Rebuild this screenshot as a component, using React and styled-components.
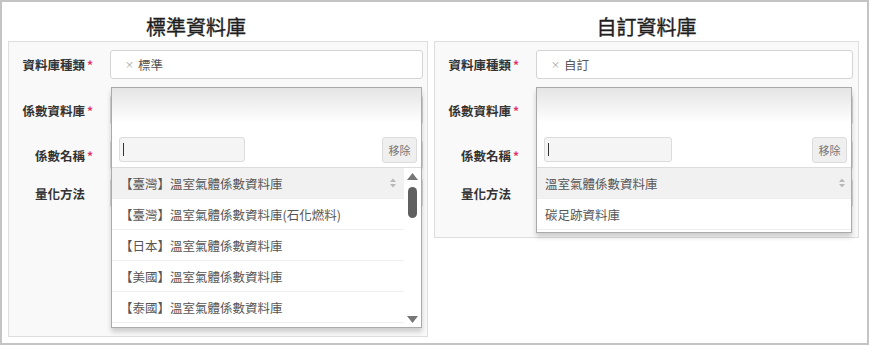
import styled, { createGlobalStyle } from "styled-components";

const GlobalStyle = createGlobalStyle`
  html, body { margin: 0; padding: 0; background: #fff; }
  body { font-family: "Noto Sans CJK TC", "Noto Sans", sans-serif; }
`;

const Frame = styled.div`
  width: 869px;
  height: 345px;
  box-sizing: border-box;
  border: 2px solid #c4c4c4;
  padding: 0 6px;
  display: flex;
  gap: 6px;
`;

const Column = styled.div`
  width: ${(p) => p.$w}px;
  display: flex;
  flex-direction: column;
`;

const Title = styled.div`
  padding: 14px ${(p) => p.$offset}px 0 0;
  height: 22px;
  line-height: 22px;
  margin-bottom: 3px;
  text-align: center;
  font-size: 20px;
  font-weight: 400;
  color: #1e1e1e;
  -webkit-text-stroke: 0.35px #1e1e1e;
`;

const Card = styled.div`
  position: relative;
  box-sizing: border-box;
  height: ${(p) => p.$h}px;
  border: 1px solid #dedede;
  background: #f9f9f9;
  padding: 8px ${(p) => p.$pr}px 0 0;
  display: flex;
  flex-direction: column;
`;

const Row = styled.div`
  display: grid;
  grid-template-columns: 101px 1fr;
  height: ${(p) => p.$h}px;
  margin-top: ${(p) => p.$mt}px;
`;

const Label = styled.div`
  display: flex;
  align-items: center;
  justify-content: flex-end;
  padding-right: 25px;
  font-size: 12.5px;
  font-weight: 700;
  color: #333;
  white-space: nowrap;
`;

const Star = styled.span`
  display: inline-block;
  width: 8px;
  margin-right: -8px;
  text-align: right;
  color: #e2336b;
  font-size: 12px;
`;

const Field = styled.div`
  box-sizing: border-box;
  border: 1px solid #d4d4d4;
  border-radius: 3px;
  background: #fff;
  display: flex;
  align-items: center;
  padding-left: 14px;
  font-size: 12.5px;
  color: #555;
`;

const TagX = styled.span`
  font-size: 9px;
  color: #999;
  margin-right: 4px;
`;

const Drop = styled.div`
  position: absolute;
  top: 45px;
  left: ${(p) => p.$left}px;
  width: ${(p) => p.$w}px;
  height: ${(p) => p.$h}px;
  box-sizing: border-box;
  border: 1px solid #aaa;
  background: #fff;
  box-shadow: 0 4px 5px rgba(0, 0, 0, 0.18);
  display: flex;
  flex-direction: column;
  overflow: hidden;
`;

const DropHead = styled.div`
  height: 41px;
  flex: none;
  background: linear-gradient(#e6e6e6 5%, #fff 85%);
`;

const SearchRow = styled.div`
  flex: none;
  display: flex;
  justify-content: space-between;
  padding: 8px 4px 4px 7px;
  border-bottom: 1px solid #dcdcdc;
`;

const SearchInput = styled.div`
  width: ${(p) => p.$w}px;
  height: 25px;
  box-sizing: border-box;
  border: 1px solid #dcdcdc;
  border-radius: 3px;
  background: #f5f5f5;
  display: flex;
  align-items: center;
  padding-left: 3px;
`;

const Caret = styled.span`
  width: 1px;
  height: 13px;
  background: #333;
`;

const RemoveButton = styled.div`
  width: 35px;
  height: 26px;
  box-sizing: border-box;
  border: 1px solid #dcdcdc;
  border-radius: 3px;
  background: #efefef;
  display: flex;
  align-items: center;
  justify-content: center;
  font-size: 11px;
  color: #777;
`;

const ListArea = styled.div`
  flex: 1;
  display: flex;
  min-height: 0;
`;

const List = styled.div`
  flex: 1;
  overflow: hidden;
`;

const Item = styled.div`
  height: 31px;
  box-sizing: border-box;
  border-bottom: 1px solid #eee;
  background: ${(p) => (p.$active ? "#f1f1f1" : "#fff")};
  display: flex;
  align-items: center;
  justify-content: space-between;
  padding: 0 ${(p) => p.$pr}px 0 8px;
  font-size: 12.5px;
  color: #555;
  white-space: nowrap;
`;

const ScrollTrack = styled.div`
  width: 17px;
  flex: none;
  display: flex;
  flex-direction: column;
  align-items: center;
  padding: 5px 0 4px;
  box-sizing: border-box;
`;

const Thumb = styled.div`
  width: 9px;
  height: 31px;
  margin-top: 7px;
  border-radius: 5px;
  background: #606060;
`;

const Spacer = styled.div`
  flex: 1;
`;

const SortIcon = () => (
  <svg width="6" height="10" viewBox="0 0 6 10">
    <path d="M0 4 L3 0.5 L6 4 Z M0 6 L3 9.5 L6 6 Z" fill="#b8b8b8" />
  </svg>
);

const Arrow = ({ down }) => (
  <svg width="11" height="7" viewBox="0 0 11 7">
    <path d={down ? "M0 0 L11 0 L5.5 7 Z" : "M0 7 L11 7 L5.5 0 Z"} fill="#777" />
  </svg>
);

const standardDbs = [
  "【臺灣】溫室氣體係數資料庫",
  "【臺灣】溫室氣體係數資料庫(石化燃料)",
  "【日本】溫室氣體係數資料庫",
  "【美國】溫室氣體係數資料庫",
  "【泰國】溫室氣體係數資料庫",
];

const customDbs = ["溫室氣體係數資料庫", "碳足跡資料庫"];

function FormRows({ tag }) {
  return (
    <>
      <Row $h={29} $mt={0}>
        <Label>
          資料庫種類<Star>*</Star>
        </Label>
        <Field>
          <TagX>×</TagX>
          {tag}
        </Field>
      </Row>
      <Row $h={30} $mt={16}>
        <Label>
          係數資料庫<Star>*</Star>
        </Label>
        <Field />
      </Row>
      <Row $h={30} $mt={15}>
        <Label>
          係數名稱<Star>*</Star>
        </Label>
        <Field />
      </Row>
      <Row $h={30} $mt={8}>
        <Label>量化方法</Label>
        <Field />
      </Row>
    </>
  );
}

function Panel({ title, offset, width, height, pr, tag, drop, items, scroll, itemPr }) {
  return (
    <Column $w={width}>
      <Title $offset={offset}>{title}</Title>
      <Card $h={height} $pr={pr}>
        <FormRows tag={tag} />
        <Drop $left={drop.left} $w={drop.w} $h={drop.h}>
          <DropHead />
          <SearchRow>
            <SearchInput $w={drop.search}>
              <Caret />
            </SearchInput>
            <RemoveButton>移除</RemoveButton>
          </SearchRow>
          <ListArea>
            <List>
              {items.map((name, i) => (
                <Item key={name} $active={i === 0} $pr={itemPr}>
                  {name}
                  {i === 0 && <SortIcon />}
                </Item>
              ))}
            </List>
            {scroll && (
              <ScrollTrack>
                <Arrow />
                <Thumb />
                <Spacer />
                <Arrow down />
              </ScrollTrack>
            )}
          </ListArea>
        </Drop>
      </Card>
    </Column>
  );
}

export default function App() {
  return (
    <>
      <GlobalStyle />
      <Frame>
        <Panel
          title="標準資料庫"
          offset={44}
          width={420}
          height={296}
          pr={4}
          tag="標準"
          drop={{ left: 102, w: 311, h: 241, search: 126 }}
          items={standardDbs}
          scroll
          itemPr={8}
        />
        <Panel
          title="自訂資料庫"
          offset={0}
          width={425}
          height={197}
          pr={5}
          tag="自訂"
          drop={{ left: 101, w: 316, h: 146, search: 128 }}
          items={customDbs}
          itemPr={6}
        />
      </Frame>
    </>
  );
}
